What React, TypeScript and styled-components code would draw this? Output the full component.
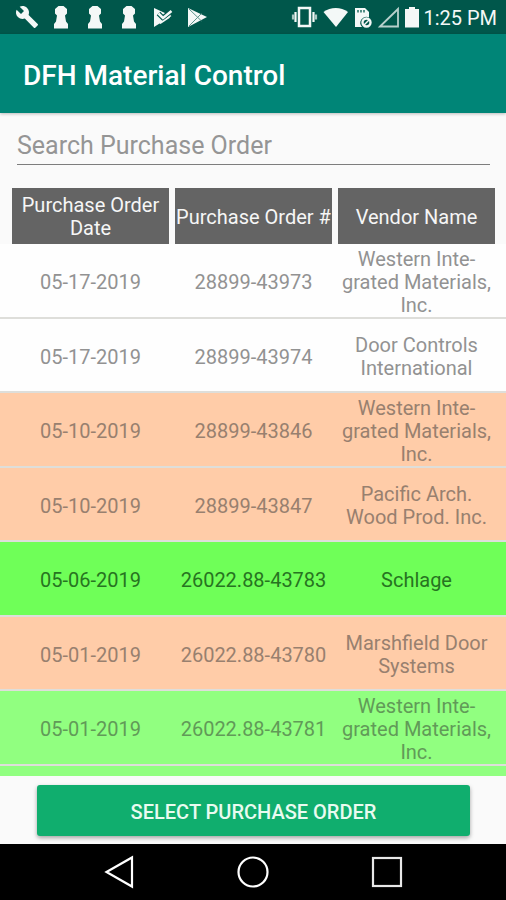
import React, { useState } from 'react';
import styled, { createGlobalStyle } from 'styled-components';

type Tone = 'plain' | 'peach' | 'green' | 'selected';

interface Order {
  date: string;
  number: string;
  vendor: string;
  tone: Tone;
}

const WESTERN = 'Western Inte\u00adgrated Materials, Inc.';

const ORDERS: Order[] = [
  { date: '05-17-2019', number: '28899-43973', vendor: WESTERN, tone: 'plain' },
  { date: '05-17-2019', number: '28899-43974', vendor: 'Door Controls International', tone: 'plain' },
  { date: '05-10-2019', number: '28899-43846', vendor: WESTERN, tone: 'peach' },
  { date: '05-10-2019', number: '28899-43847', vendor: 'Pacific Arch. Wood Prod. Inc.', tone: 'peach' },
  { date: '05-06-2019', number: '26022.88-43783', vendor: 'Schlage', tone: 'selected' },
  { date: '05-01-2019', number: '26022.88-43780', vendor: 'Marshfield Door Systems', tone: 'peach' },
  { date: '05-01-2019', number: '26022.88-43781', vendor: WESTERN, tone: 'green' },
  { date: '', number: '', vendor: '', tone: 'green' },
];

const ROW_FILL: Record<Tone, string> = {
  plain: '#fefefe',
  peach: '#ffcca8',
  green: '#91ff80',
  selected: '#6fff58',
};

const ROW_TEXT: Record<Tone, string> = {
  plain: '#929292',
  peach: '#98806f',
  green: '#619a58',
  selected: '#277421',
};

const GlobalStyle = createGlobalStyle`
  * { box-sizing: border-box; }
  body {
    margin: 0;
    background: #fafafa;
    font-family: Roboto, 'Liberation Sans', sans-serif;
  }
`;

const Screen = styled.div`
  display: flex;
  flex-direction: column;
  height: 100vh;
  background: #fafafa;
`;

const StatusBar = styled.div`
  flex: none;
  display: flex;
  justify-content: space-between;
  align-items: center;
  height: 34px;
  padding: 0 9px 0 15px;
  background: #00574b;
  color: #f4f8f7;
`;

const IconGroup = styled.div<{ $gap: number }>`
  display: flex;
  align-items: center;
  gap: ${({ $gap }) => $gap}px;

  svg {
    display: block;
    flex: none;
  }
`;

const Clock = styled.time`
  font-size: 20px;
  line-height: 24px;
  padding-top: 2px;
  white-space: nowrap;
`;

const AppBar = styled.header`
  flex: none;
  display: flex;
  align-items: center;
  height: 79px;
  padding: 4px 23px 0;
  background: #008577;
  box-shadow: 0 1px 3px rgba(0, 0, 0, 0.25);
`;

const Title = styled.h1`
  margin: 0;
  color: #fff;
  font-size: 28px;
  font-weight: 500;
  line-height: 32px;
`;

const Content = styled.main`
  flex: 1;
  min-height: 0;
  display: flex;
  flex-direction: column;
`;

const SearchField = styled.input`
  flex: none;
  height: 36px;
  margin: 16px 16px 23px 17px;
  padding: 0 0 2px 0;
  border: 0;
  border-bottom: 1px solid #7d7d7d;
  border-radius: 0;
  background: transparent;
  color: #333;
  font: 400 25px/30px Roboto, 'Liberation Sans', sans-serif;
  outline: none;

  &::placeholder {
    color: #959595;
    opacity: 1;
  }
`;

const OrderTable = styled.table`
  flex: 1;
  min-height: 0;
  display: flex;
  flex-direction: column;
  font-size: 20px;
  line-height: 23px;
`;

const TableHead = styled.thead`
  flex: none;
  display: block;
`;

const TableBody = styled.tbody`
  flex: 1;
  min-height: 0;
  display: block;
  overflow-y: auto;
  scrollbar-width: none;
`;

const Row = styled.tr`
  display: grid;
  grid-template-columns: repeat(3, minmax(0, 1fr));
  gap: 6px;
  padding: 0 11px 0 12px;
`;

const HeadCell = styled.th`
  display: flex;
  align-items: center;
  justify-content: center;
  height: 56px;
  padding: 2px 0 0;
  background: #646464;
  color: #f6f6f6;
  font-weight: 400;
  text-align: center;
`;

const OrderRow = styled(Row)<{ $tone: Tone }>`
  height: 75px;
  border-bottom: 2px solid #dededa;
  background: ${({ $tone }) => ROW_FILL[$tone]};
  color: ${({ $tone }) => ROW_TEXT[$tone]};
  cursor: pointer;

  &:nth-child(even) {
    height: 74px;
  }
`;

const Cell = styled.td`
  display: flex;
  align-items: center;
  justify-content: center;
  padding: 4px 4px 0;
  text-align: center;
`;

const Actions = styled.div`
  flex: none;
  display: flex;
  padding: 9px 36px 8px 37px;
`;

const SelectButton = styled.button`
  flex: 1;
  height: 51px;
  padding: 2px 16px 0;
  border: 0;
  border-radius: 3px;
  background: #10ae6e;
  box-shadow: 0 2px 4px rgba(0, 0, 0, 0.35);
  color: #e9fbf0;
  font: 500 20px/24px Roboto, 'Liberation Sans', sans-serif;
`;

const NavBar = styled.nav`
  flex: none;
  display: flex;
  justify-content: center;
  align-items: center;
  gap: 98px;
  height: 56px;
  background: #000;
`;

const NavButton = styled.button`
  width: 36px;
  height: 36px;
  padding: 0;
  border: 0;
  background: transparent;

  svg {
    display: block;
  }
`;

const Wrench = () => (
  <svg width="24" height="24" viewBox="0 0 24 24" fill="currentColor">
    <path d="M22.7 19l-9.1-9.1c.9-2.3.4-5-1.5-6.9-2-2-5-2.4-7.4-1.3L9 6 6 9 1.600 4.700C.4 7.100.9 10.100 2.900 12.100c1.900 1.900 4.600 2.400 6.900 1.500l9.100 9.100c.4.4 1 .4 1.400 0l2.300-2.300c.5-.4.5-1.100.1-1.400z" />
  </svg>
);

const Keyhole = () => (
  <svg width="24" height="24" viewBox="0 0 24 24" fill="currentColor">
    <path d="M9.500 1h5l3.500 3v4.500l-2 2 1 6 2 2.500v4.500H5V19l2-2.500 1-6-2-2V4z" />
  </svg>
);

const PlayCheck = () => (
  <svg width="24" height="24" viewBox="0 0 24 24" fill="none">
    <path d="M3 3l17.500 8L3 22z" fill="currentColor" />
    <path d="M7.500 8.500l4.500 4.500 8.500-7" stroke="#00574b" strokeWidth="5" />
    <path d="M7.500 8.500l4.500 4.500 8.500-7" stroke="currentColor" strokeWidth="2.500" />
    <path d="M6 16.500l6-1 8-6-1.500 3.500-9 6z" fill="currentColor" />
  </svg>
);

const PlayStore = () => (
  <svg width="24" height="24" viewBox="0 0 24 24" fill="none">
    <path d="M3 3l19 9L3 22z" fill="currentColor" />
    <path d="M4 4L16.500 16M4 21L16.500 8.500" stroke="#5f958d" strokeWidth="1" />
  </svg>
);

const Vibrate = () => (
  <svg width="28" height="24" viewBox="0 0 28 24" fill="none" stroke="currentColor">
    <rect x="8" y="3" width="11" height="18" strokeWidth="2.500" />
    <path d="M4.500 7v10M22.500 7v10" strokeWidth="2.200" />
    <path d="M2 9.500v5M25 9.500v5" strokeWidth="2.200" opacity="0.7" />
  </svg>
);

const Wifi = () => (
  <svg width="26" height="24" viewBox="0 0 26 24" fill="currentColor">
    <path d="M.5 7C7.500 1.500 18 1.500 25 7L13 22z" />
  </svg>
);

const StorageOff = () => (
  <svg width="20" height="24" viewBox="0 0 20 24" fill="none">
    <path d="M2 3h10l4 4v5.500a6 6 0 0 0-7 9.500H2z" fill="currentColor" />
    <path d="M5 5v2.500M8 5v2.500M11 5v2.500" stroke="#00574b" strokeWidth="1.300" />
    <circle cx="13.500" cy="17.500" r="4" stroke="currentColor" strokeWidth="2.400" />
    <path d="M10.500 20.500l6-6" stroke="currentColor" strokeWidth="1.500" />
  </svg>
);

const Signal = () => (
  <svg width="24" height="24" viewBox="0 0 24 24" fill="none">
    <path d="M3 21.500L21 4v17.500z" stroke="#b7d0cc" strokeWidth="1.800" />
  </svg>
);

const Battery = () => (
  <svg width="14" height="24" viewBox="0 0 14 24" fill="currentColor">
    <path d="M4 2h6v2h4v18.500H0V4h4z" />
  </svg>
);

export default function App() {
  const [query, setQuery] = useState('');
  const rows = ORDERS.filter((o) => `${o.date} ${o.number} ${o.vendor}`.toLowerCase().includes(query.toLowerCase()));

  return (
    <Screen>
      <GlobalStyle />
      <StatusBar>
        <IconGroup $gap={10}>
          <Wrench />
          <Keyhole />
          <Keyhole />
          <Keyhole />
          <PlayCheck />
          <PlayStore />
        </IconGroup>
        <IconGroup $gap={4}>
          <Vibrate />
          <Wifi />
          <StorageOff />
          <Signal />
          <Battery />
          <Clock>1:25 PM</Clock>
        </IconGroup>
      </StatusBar>
      <AppBar>
        <Title>DFH Material Control</Title>
      </AppBar>
      <Content>
        <SearchField
          type="text"
          aria-label="Search Purchase Order"
          placeholder="Search Purchase Order"
          value={query}
          onChange={(e) => setQuery(e.target.value)}
        />
        <OrderTable>
          <TableHead>
            <Row>
              <HeadCell scope="col">Purchase Order Date</HeadCell>
              <HeadCell scope="col">Purchase Order #</HeadCell>
              <HeadCell scope="col">Vendor Name</HeadCell>
            </Row>
          </TableHead>
          <TableBody>
            {rows.map((order, index) => (
              <OrderRow key={index} $tone={order.tone}>
                <Cell>{order.date}</Cell>
                <Cell>{order.number}</Cell>
                <Cell>{order.vendor}</Cell>
              </OrderRow>
            ))}
          </TableBody>
        </OrderTable>
        <Actions>
          <SelectButton type="button">SELECT PURCHASE ORDER</SelectButton>
        </Actions>
      </Content>
      <NavBar>
        <NavButton type="button" aria-label="Back">
          <svg width="36" height="36" viewBox="0 0 36 36" fill="none" stroke="#fff" strokeWidth="2.200">
            <path d="M5.500 18L31 3.500v29z" />
          </svg>
        </NavButton>
        <NavButton type="button" aria-label="Home">
          <svg width="36" height="36" viewBox="0 0 36 36" fill="none" stroke="#fff" strokeWidth="2.200">
            <circle cx="18" cy="18" r="14.500" />
          </svg>
        </NavButton>
        <NavButton type="button" aria-label="Recent apps">
          <svg width="36" height="36" viewBox="0 0 36 36" fill="none" stroke="#e8e8e8" strokeWidth="2.200">
            <rect x="4" y="4" width="28" height="28" />
          </svg>
        </NavButton>
      </NavBar>
    </Screen>
  );
}
